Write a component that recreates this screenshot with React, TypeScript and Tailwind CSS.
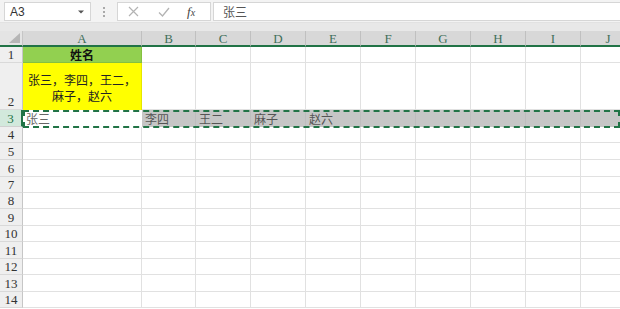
import React from "react";

const COLS = ["A", "B", "C", "D", "E", "F", "G", "H", "I", "J"];
const W_CLASS = ["w-[119px]", "w-[54px]", "w-[55px]", "w-[55px]", "w-[55px]", "w-[55px]", "w-[55px]", "w-[55px]", "w-[55px]", "w-[55px]"];
const LOWER_HEIGHTS = ["h-[16px]", "h-[17px]", "h-[17px]", "h-[16px]", "h-[16px]", "h-[17px]", "h-[16px]", "h-[17px]", "h-[16px]", "h-[17px]", "h-[16px]"];

const serif = { fontFamily: '"Liberation Serif", "DejaVu Serif", serif' };
const cjk = { fontFamily: '"Noto Sans CJK SC", "Liberation Sans", sans-serif' };

function RowHeader({ n, h, active }: { n: number; h: string; active?: boolean }) {
  return (
    <div
      className={`${h} w-[23px] shrink-0 flex items-end justify-center pb-[1px] text-[13px] leading-none box-border border-b border-r ${
        active
          ? "bg-[#d2e9dc] text-[#217346] border-b-[#d0d0d0] border-r-[#217346] border-r-2"
          : "bg-[#efefef] text-[#333] border-b-[#d9d9d9] border-r-[#c6c6c6]"
      }`}
      style={serif}
    >
      {n}
    </div>
  );
}

function EmptyCells({ h }: { h: string }) {
  return (
    <>
      {W_CLASS.map((w, i) => (
        <div key={i} className={`${h} ${w} shrink-0 box-border border-r border-b border-[#e1e1e1] bg-white`} />
      ))}
    </>
  );
}

export default function App() {
  return (
    <div className="w-[620px] h-[309px] overflow-hidden bg-white relative select-none">
      {/* toolbar */}
      <div className="h-[23px] bg-[#f3f3f3] flex items-start pt-[2px] border-b border-[#e2e2e2] box-border">
        <div className="ml-[4px] w-[87px] h-[19px] bg-white border border-[#d6d6d6] box-border flex items-center justify-between pl-[5px] pr-[6px]">
          <span className="text-[12px] text-[#333] leading-none" style={{ fontFamily: '"Liberation Sans", sans-serif' }}>A3</span>
          <svg width="6" height="4" viewBox="0 0 6 4"><path d="M0 0.5h6L3 3.5z" fill="#555" /></svg>
        </div>
        <div className="w-[26px] h-[19px] flex flex-col items-center justify-center gap-[2px]">
          <div className="w-[2px] h-[2px] bg-[#a9a9a9]" />
          <div className="w-[2px] h-[2px] bg-[#a9a9a9]" />
          <div className="w-[2px] h-[2px] bg-[#a9a9a9]" />
        </div>
        <div className="w-[94px] h-[19px] bg-white border border-[#d6d6d6] box-border flex items-center">
          <svg className="ml-[10px]" width="11" height="11" viewBox="0 0 11 11">
            <path d="M1 1L10 10M10 1L1 10" stroke="#b3b3b3" strokeWidth="1.2" fill="none" />
          </svg>
          <svg className="ml-[19px]" width="12" height="10" viewBox="0 0 12 10">
            <path d="M1 5.5L4.5 9L11 1" stroke="#b3b3b3" strokeWidth="1.3" fill="none" />
          </svg>
          <span className="ml-[17px] text-[13px] italic text-[#444] leading-none" style={serif}>
            f<span className="text-[10px]">x</span>
          </span>
        </div>
        <div className="ml-[2px] flex-1 h-[19px] bg-white border border-[#d6d6d6] border-r-0 box-border flex items-center pl-[9px]">
          <span className="text-[12px] text-[#555] leading-none" style={cjk}>张三</span>
        </div>
      </div>
      <div className="h-[8px] bg-[#e8e8e8]" />

      {/* column header */}
      <div className="flex h-[16px]">
        <div className="w-[23px] h-[16px] shrink-0 bg-[#e4e4e4] border-r border-b-2 border-r-[#c6c6c6] border-b-[#217346] box-border relative">
          <svg className="absolute right-[2px] bottom-[2px]" width="11" height="10" viewBox="0 0 11 10">
            <path d="M11 0V10H0z" fill="#b6b6b6" />
          </svg>
        </div>
        {COLS.map((c, i) => (
          <div
            key={c}
            className={`${W_CLASS[i]} h-[16px] shrink-0 bg-[#d8d8d8] border-r border-r-[#c0c0c0] border-b-2 border-b-[#217346] box-border flex items-center justify-center text-[13px] text-[#3f6f5a] leading-none`}
            style={serif}
          >
            {c}
          </div>
        ))}
        <div className="flex-1 bg-[#d8d8d8] border-b-2 border-b-[#217346] box-border" />
      </div>

      {/* row 1 */}
      <div className="flex">
        <RowHeader n={1} h="h-[16px]" />
        <div className="h-[16px] w-[119px] shrink-0 bg-[#92d050] border-r border-b border-[#84c040] box-border flex items-center justify-center">
          <span className="text-[12px] font-bold text-[#111] leading-none" style={cjk}>姓名</span>
        </div>
        {W_CLASS.slice(1).map((w, i) => (
          <div key={i} className={`h-[16px] ${w} shrink-0 box-border border-r border-b border-[#e1e1e1]`} />
        ))}
      </div>

      {/* row 2 */}
      <div className="flex">
        <RowHeader n={2} h="h-[47px]" />
        <div className="h-[47px] w-[119px] shrink-0 bg-[#ffff00] border-r border-[#e6e600] box-border flex flex-col items-center justify-end pb-[6px] text-[12px] text-[#222]" style={cjk}>
          <span className="block h-[16px] leading-[16px]">张三，李四，王二，</span>
          <span className="block h-[16px] leading-[16px]">麻子，赵六</span>
        </div>
        {W_CLASS.slice(1).map((w, i) => (
          <div key={i} className={`h-[47px] ${w} shrink-0 box-border border-r border-b border-[#e1e1e1]`} />
        ))}
      </div>

      {/* row 3 (selected) */}
      <div className="flex relative">
        <RowHeader n={3} h="h-[17px]" active />
        <div className="h-[17px] w-[119px] shrink-0 bg-white flex items-center pl-[3px] text-[12px] text-[#666] leading-none" style={cjk}>
          张三
        </div>
        {["李四", "王二", "麻子", "赵六", "", "", "", "", ""].map((t, i) => (
          <div
            key={i}
            className={`h-[17px] ${W_CLASS[i + 1]} shrink-0 bg-[#c6c6c6] border-r border-[#bdbdbd] box-border flex items-center pl-[3px] text-[12px] text-[#555] leading-none`}
            style={cjk}
          >
            {t}
          </div>
        ))}
        <div className="flex-1 bg-[#c6c6c6]" />
        <div className="absolute left-[23px] right-0 top-0 h-[18px] border-2 border-dashed border-[#217346] box-border pointer-events-none" />
      </div>

      {/* rows 4-14 */}
      {LOWER_HEIGHTS.map((h, i) => (
        <div key={i} className="flex">
          <RowHeader n={i + 4} h={h} />
          <EmptyCells h={h} />
        </div>
      ))}
    </div>
  );
}
